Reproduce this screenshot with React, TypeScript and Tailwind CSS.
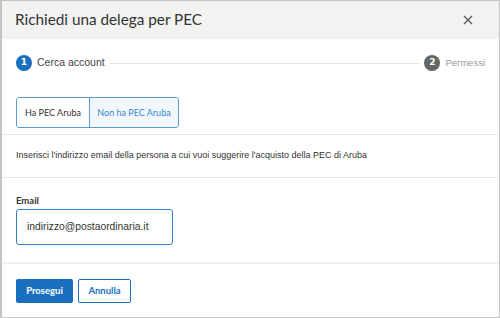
import { useState } from 'react';

const LATO = "font-['Lato',_'Liberation_Sans',_sans-serif]";
const ARIAL = "font-['Liberation_Sans',_Arial,_sans-serif]";

export default function App() {
  const [hasPec, setHasPec] = useState(false);
  const [email, setEmail] = useState('indirizzo@postaordinaria.it');

  return (
    <div className="w-[500px] h-[318px] bg-white">
      <div className="flex flex-col h-full border border-l-2 border-[#c4c4c4] overflow-hidden">
        <div className="flex items-center justify-between h-[38px] bg-[#f2f2f1] pl-[13px] pr-[26px] shrink-0">
          <h1 className={`${LATO} text-[15.3px] text-[#333] leading-none`}>Richiedi una delega per PEC</h1>
          <button className="text-[#555]" aria-label="Chiudi">
            <svg width="10" height="10" viewBox="0 0 10 10" fill="none" stroke="currentColor" strokeWidth="1.2">
              <path d="M1 1 L9 9 M9 1 L1 9" />
            </svg>
          </button>
        </div>

        <div className="flex items-center h-[48px] pl-[14px] pr-[14px] shrink-0">
          <span className="flex items-center justify-center w-4 h-4 rounded-full bg-[#1a6fbf] text-white text-[9px] font-bold font-['DejaVu_Sans',_sans-serif]">1</span>
          <span className={`${ARIAL} ml-[5px] text-[10.5px] text-[#444]`}>Cerca account</span>
          <div className="flex-1 h-px bg-[#e2e2e2] mx-[5px]" />
          <span className="flex items-center justify-center w-4 h-4 rounded-full bg-[#666] text-white text-[9px] font-bold font-['DejaVu_Sans',_sans-serif]">2</span>
          <span className={`${ARIAL} ml-[5px] text-[9.5px] text-[#999]`}>Permessi</span>
        </div>

        <div className="pl-[14px] pt-[10px] pb-[6px] shrink-0">
          <div className={`${LATO} inline-flex border border-[#5c9ad2] rounded-[3px] overflow-hidden text-[9px]`}>
            <button
              onClick={() => setHasPec(true)}
              className={`h-[29px] w-[72px] ${hasPec ? 'bg-[#f1f7fd] text-[#3a87cc]' : 'bg-white text-[#333]'}`}
            >
              Ha PEC Aruba
            </button>
            <button
              onClick={() => setHasPec(false)}
              className={`h-[29px] w-[89px] border-l border-[#5c9ad2] ${!hasPec ? 'bg-[#f1f7fd] text-[#3a87cc]' : 'bg-white text-[#333]'}`}
            >
              Non ha PEC Aruba
            </button>
          </div>
        </div>

        <div className="border-t border-[#e8e8e8] h-[43px] flex items-center pl-[14px] shrink-0">
          <p className={`${ARIAL} text-[9px] text-[#333]`}>
            Inserisci l'indirizzo email della persona a cui vuoi suggerire l'acquisto della PEC di Aruba
          </p>
        </div>

        <div className="border-t border-[#e8e8e8] pl-[14px] pt-[18px] h-[85px] shrink-0">
          <label className={`${LATO} block text-[9.5px] font-bold text-[#333] leading-none`}>Email</label>
          <input
            value={email}
            onChange={(e) => setEmail(e.target.value)}
            className={`${ARIAL} mt-[3px] w-[157px] h-[36px] px-[10px] border border-[#2f7fc8] rounded-[3px] text-[10.3px] text-[#333] outline-none`}
          />
        </div>

        <div className="border-t-2 border-[#efefef] flex items-start gap-[5px] pl-[14px] pt-[15px] flex-1">
          <button className={`${LATO} h-[24px] w-[57px] bg-[#1a6fbf] text-white text-[9.5px] font-bold rounded-[2px]`}>
            Prosegui
          </button>
          <button className={`${LATO} h-[24px] w-[53px] bg-white border border-[#1a6fbf] text-[#1a6fbf] text-[9.5px] font-bold rounded-[2px]`}>
            Annulla
          </button>
        </div>
      </div>
    </div>
  );
}
